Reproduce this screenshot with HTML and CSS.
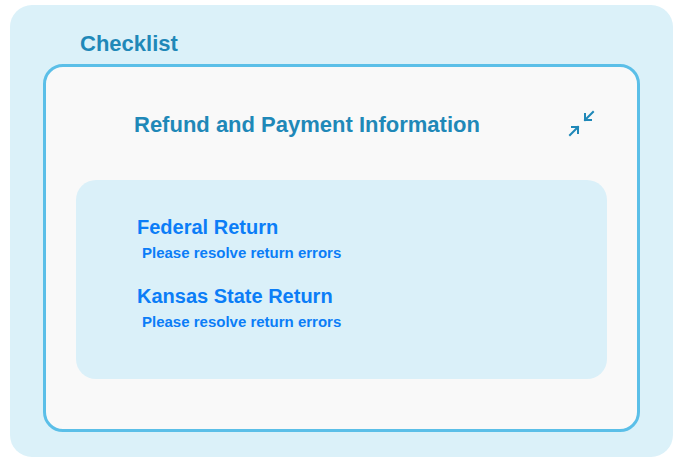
FILE: index.html
```html
<!DOCTYPE html>
<html lang="en">
  <head>
    <meta charset="UTF-8" />
    <meta name="viewport" content="width=device-width, initial-scale=1.0" />
    <title>Checklist</title>
    <link rel="stylesheet" href="styles.css">
  </head>
  <body>
    <div class="panel">
      <h2 class="panel-title">Checklist</h2>
      <div class="card">
        <div class="card-header">
          <h1 class="card-title">Refund and Payment Information</h1>
          <button class="collapse-btn" aria-label="Collapse">
            <svg width="28" height="28" viewBox="0 0 28 28" fill="none" stroke="currentColor" stroke-width="2" stroke-linecap="square">
              <path d="M25 2 L17 10 M17 4 V10 H23" />
              <path d="M2 25 L10 17 M4 17 H10 V23" />
            </svg>
          </button>
        </div>
        <div class="returns">
          <div class="return-item">
            <h3>Federal Return</h3>
            <p>Please resolve return errors</p>
          </div>
          <div class="return-item">
            <h3>Kansas State Return</h3>
            <p>Please resolve return errors</p>
          </div>
        </div>
      </div>
    </div>
  </body>
</html>
```

FILE: styles.css
```css
body {
  font-family: 'Liberation Sans', Arial, sans-serif;
  margin: 0;
  padding: 5px 8px 4px 10px;
  background-color: #ffffff;
}
.panel {
  background-color: #dbf1f9;
  border-radius: 22px;
  padding: 26px 33px 25px 33px;
  height: 452px;
  box-sizing: border-box;
}
.panel-title {
  margin: 0 0 8px 37px;
  font-size: 22px;
  line-height: 25px;
  color: #1f88b8;
}
.card {
  background-color: #f9f9f9;
  border: 3px solid #5bbfe8;
  border-radius: 20px;
  padding: 43px 30px 50px 30px;
}
.card-header {
  display: flex;
  align-items: center;
  justify-content: space-between;
  padding-left: 58px;
  padding-right: 11px;
  margin-bottom: 42px;
}
.card-title {
  margin: 0;
  font-size: 22px;
  line-height: 25px;
  color: #1f88b8;
}
.collapse-btn {
  background: none;
  border: none;
  padding: 0;
  color: #1f88b8;
  cursor: pointer;
  display: flex;
}
.returns {
  background-color: #daf0f9;
  border-radius: 20px;
  padding: 36px 61px 49px 61px;
  display: flex;
  flex-direction: column;
  gap: 24px;
}
.return-item h3 {
  margin: 0 0 5px 0;
  font-size: 20px;
  line-height: 23px;
  color: #0b7df7;
}
.return-item p {
  margin: 0 0 0 5px;
  font-size: 15px;
  line-height: 17px;
  font-weight: bold;
  color: #0b7df7;
}
```
